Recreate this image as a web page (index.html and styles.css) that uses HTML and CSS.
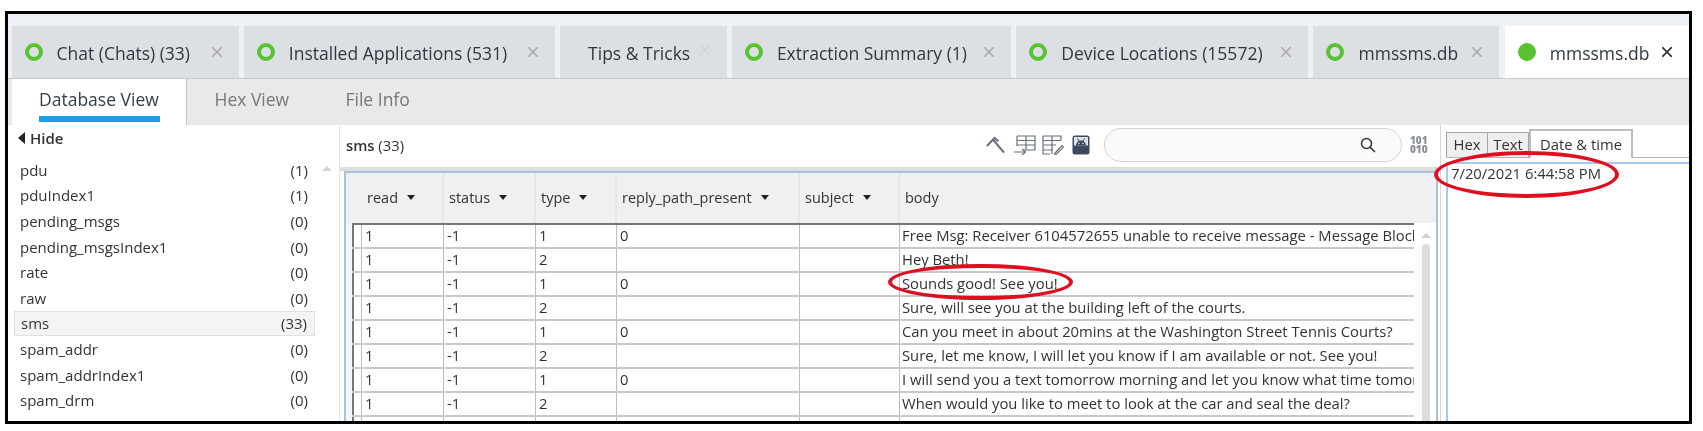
FILE: index.html
```html
<!DOCTYPE html>
<html lang="en">
<head>
<meta charset="utf-8">
<title>mmssms.db</title>
<link rel="stylesheet" href="styles.css">
</head>
<body>
<div class="frame">
  <nav class="tabs">
    <div class="tab"><span class="ring"></span><span class="tab-label">Chat (Chats) (33)</span><svg class="close" viewBox="0 0 10 10"><path d="M0 0L10 10M10 0L0 10"/></svg></div>
    <div class="tab"><span class="ring"></span><span class="tab-label">Installed Applications (531)</span><svg class="close" viewBox="0 0 10 10"><path d="M0 0L10 10M10 0L0 10"/></svg></div>
    <div class="tab tab-plain"><span class="tab-label">Tips &amp; Tricks</span><svg class="close close-faint" viewBox="0 0 10 10"><path d="M0 0L10 10M10 0L0 10"/></svg></div>
    <div class="tab"><span class="ring"></span><span class="tab-label">Extraction Summary (1)</span><svg class="close" viewBox="0 0 10 10"><path d="M0 0L10 10M10 0L0 10"/></svg></div>
    <div class="tab"><span class="ring"></span><span class="tab-label">Device Locations (15572)</span><svg class="close" viewBox="0 0 10 10"><path d="M0 0L10 10M10 0L0 10"/></svg></div>
    <div class="tab"><span class="ring"></span><span class="tab-label">mmssms.db</span><svg class="close" viewBox="0 0 10 10"><path d="M0 0L10 10M10 0L0 10"/></svg></div>
    <div class="tab tab-active"><span class="ring ring-solid"></span><span class="tab-label">mmssms.db</span><svg class="close close-dark" viewBox="0 0 10 10"><path d="M0 0L10 10M10 0L0 10"/></svg></div>
  </nav>

  <div class="subtabs">
    <div class="subtab subtab-active"><span class="subtab-label">Database View</span></div>
    <div class="subtab subtab-hex"><span class="subtab-label">Hex View</span></div>
    <div class="subtab subtab-file"><span class="subtab-label">File Info</span></div>
  </div>

  <div class="content">
    <aside class="side">
      <div class="hide"><span class="hide-arrow"></span>Hide</div>
      <div class="side-body">
        <ul class="list">
          <li class="item"><span>pdu</span><span>(1)</span></li>
          <li class="item"><span>pduIndex1</span><span>(1)</span></li>
          <li class="item"><span>pending_msgs</span><span>(0)</span></li>
          <li class="item"><span>pending_msgsIndex1</span><span>(0)</span></li>
          <li class="item"><span>rate</span><span>(0)</span></li>
          <li class="item"><span>raw</span><span>(0)</span></li>
          <li class="item item-selected"><span>sms</span><span>(33)</span></li>
          <li class="item"><span>spam_addr</span><span>(0)</span></li>
          <li class="item"><span>spam_addrIndex1</span><span>(0)</span></li>
          <li class="item"><span>spam_drm</span><span>(0)</span></li>
          <li class="item"><span>spam_filter</span><span>(0)</span></li>
        </ul>
        <div class="side-scroll"><span class="arrow-up"></span></div>
      </div>
    </aside>

    <section class="main">
      <header class="toolbar">
        <div class="title"><span class="title-name">sms</span> (33)</div>
        <div class="tools">
          <svg class="tool tool-pick" viewBox="0 0 20 18"><path d="M1 10L9 1.500L13 5" fill="none"/><path d="M7 3L19 17" fill="none"/></svg>
          <svg class="tool tool-table" viewBox="0 0 22 20"><path d="M3 1H21V15H9M3 1V11M3 5.500H21M3 10H21M12 1V15" fill="none"/><path d="M0 17H11M8 14L11.500 17L8 20" fill="none"/></svg>
          <svg class="tool tool-table" viewBox="0 0 22 20"><path d="M1 1H19V5M1 1V15H11M1 5.500H19M1 10H14M10 1V19M1 15V19H8" fill="none"/><path d="M13 18L20 10.500L21.500 12L14.500 19L12.500 19.500Z" fill="none"/></svg>
          <svg class="tool-android" viewBox="0 0 18 20"><rect x="0.500" y="0.500" width="17" height="19" rx="2.500" fill="#3b4a5e"/><rect x="2" y="2" width="14" height="8.500" fill="#dfe3e8"/><path d="M4 10.500A5 5 0 0 1 14 10.500Z" fill="#3b4a5e"/><path d="M5.500 3.500L7 6M12.500 3.500L11 6" stroke="#3b4a5e" stroke-width="1"/><circle cx="7" cy="8.500" r="0.800" fill="#dfe3e8"/><circle cx="11" cy="8.500" r="0.800" fill="#dfe3e8"/></svg>
        </div>
        <div class="search">
          <svg class="magnifier" viewBox="0 0 16 16"><circle cx="6.500" cy="6.500" r="5" fill="none"/><path d="M10 10L15 15"/></svg>
        </div>
        <div class="binary">101<br>010</div>
      </header>
      <div class="band"></div>
      <div class="grid-panel">
        <div class="grid-head">
          <div class="head-cell"></div>
          <div class="head-cell">read<span class="caret"></span></div>
          <div class="head-cell">status<span class="caret"></span></div>
          <div class="head-cell">type<span class="caret"></span></div>
          <div class="head-cell">reply_path_present<span class="caret"></span></div>
          <div class="head-cell">subject<span class="caret"></span></div>
          <div class="head-cell">body</div>
        </div>
        <div class="grid-body">
          <div class="rows">
            <div class="row"><div class="cell"></div><div class="cell">1</div><div class="cell">-1</div><div class="cell">1</div><div class="cell">0</div><div class="cell"></div><div class="cell cell-body">Free Msg: Receiver 6104572655 unable to receive message - Message Blocking is active.</div></div>
            <div class="row"><div class="cell"></div><div class="cell">1</div><div class="cell">-1</div><div class="cell">2</div><div class="cell"></div><div class="cell"></div><div class="cell cell-body">Hey Beth!</div></div>
            <div class="row"><div class="cell"></div><div class="cell">1</div><div class="cell">-1</div><div class="cell">1</div><div class="cell">0</div><div class="cell"></div><div class="cell cell-body">Sounds good! See you!</div></div>
            <div class="row"><div class="cell"></div><div class="cell">1</div><div class="cell">-1</div><div class="cell">2</div><div class="cell"></div><div class="cell"></div><div class="cell cell-body">Sure, will see you at the building left of the courts.</div></div>
            <div class="row"><div class="cell"></div><div class="cell">1</div><div class="cell">-1</div><div class="cell">1</div><div class="cell">0</div><div class="cell"></div><div class="cell cell-body">Can you meet in about 20mins at the Washington Street Tennis Courts?</div></div>
            <div class="row"><div class="cell"></div><div class="cell">1</div><div class="cell">-1</div><div class="cell">2</div><div class="cell"></div><div class="cell"></div><div class="cell cell-body">Sure, let me know, I will let you know if I am available or not. See you!</div></div>
            <div class="row"><div class="cell"></div><div class="cell">1</div><div class="cell">-1</div><div class="cell">1</div><div class="cell">0</div><div class="cell"></div><div class="cell cell-body">I will send you a text tomorrow morning and let you know what time tomorrow works.</div></div>
            <div class="row"><div class="cell"></div><div class="cell">1</div><div class="cell">-1</div><div class="cell">2</div><div class="cell"></div><div class="cell"></div><div class="cell cell-body">When would you like to meet to look at the car and seal the deal?</div></div>
            <div class="row"><div class="cell"></div><div class="cell">1</div><div class="cell">-1</div><div class="cell">1</div><div class="cell">0</div><div class="cell"></div><div class="cell cell-body">Hi, is the car still for sale?</div></div>
          </div>
          <div class="grid-scroll"><span class="arrow-up"></span><span class="thumb"></span></div>
        </div>
      </div>
    </section>

    <aside class="detail">
      <div class="detail-tabs">
        <div class="dtab dtab-hex">Hex</div>
        <div class="dtab dtab-text">Text</div>
        <div class="dtab dtab-active">Date &amp; time</div>
      </div>
      <div class="detail-box">7/20/2021 6:44:58 PM</div>
    </aside>
  </div>

  <span class="oval oval-date"></span>
  <span class="oval oval-msg"></span>
</div>
</body>
</html>
```
FILE: styles.css
```css
* { box-sizing: border-box; }
html, body { margin: 0; padding: 0; background: #fff; }
body { width: 1703px; height: 431px; overflow: hidden; font-family: "Open Sans", "Noto Sans", sans-serif; color: #2b2b2b; }

.frame {
  position: relative;
  width: 1687px;
  height: 413px;
  margin: 11px 0 0 5px;
  border: 3px solid #000;
  overflow: hidden;
  background: #fff;
  display: flex;
  flex-direction: column;
  filter: blur(0.45px);
}

/* top tabs */
.tabs {
  flex: none;
  height: 65px;
  padding: 12px 0 0 3.5px;
  background: #eef1f6;
  border-bottom: 1px solid #c9c9c9;
  display: grid;
  grid-template-columns: 227px 311px 166.500px 279px 292px 186px 184px;
  column-gap: 5.300px;
}
.tab {
  display: flex;
  align-items: center;
  padding: 0 17px 0 13px;
  background: #dde0e3;
  font-size: 17.500px;
  color: #2f3842;
}
.tab-plain { padding-left: 28px; }
.tab-active { background: #fff; }
.ring { flex: none; width: 18px; height: 18px; margin-right: 14px; border: 4px solid #58c332; border-radius: 50%; }
.ring-solid { background: #58c332; }
.tab-label { padding-top: 2px; white-space: nowrap; }
.close { flex: none; width: 10px; height: 10px; margin-left: auto; stroke: #a8a8a8; stroke-width: 1.500; }
.close-faint { stroke: #d0d3d6; margin-top: -5px; }
.close-dark { stroke: #333; stroke-width: 1.700; }

/* sub tabs */
.subtabs {
  flex: none;
  height: 46px;
  padding-left: 3.500px;
  background: #e9e9e9;
  display: flex;
  font-size: 17.500px;
  color: #777;
}
.subtab { display: flex; }
.subtab-label { display: block; padding-top: 8px; height: 43px; white-space: nowrap; }
.subtab-active { width: 175px; padding-left: 27.500px; background: #fff; border-right: 1px solid #c4c4c4; color: #33404c; }
.subtab-active .subtab-label { border-bottom: 6px solid #1b9fe0; width: 121px; }
.subtab-hex { margin-left: 28px; width: 131px; }
.subtab-file { width: 80px; }

/* content */
.content { flex: 1; min-height: 0; display: flex; }

.side { flex: none; width: 332px; border-right: 1px solid #e4e4e4; background: #fff; font-size: 15px; }
.hide { height: 32px; padding: 0 0 6px 10px; display: flex; align-items: center; font-weight: 600; color: #333; }
.hide-arrow { width: 0; height: 0; margin-right: 5px; border-style: solid; border-width: 6px 7px 6px 0; border-color: transparent #222 transparent transparent; }
.side-body { display: flex; }
.list { list-style: none; margin: 0 0 0 6px; padding: 0; width: 300.600px; }
.item { height: 25.600px; padding: 0 6.600px 0 6px; display: flex; justify-content: space-between; align-items: center; color: #333; border: 1px solid transparent; border-left-width: 0; border-right-width: 0; }
.item-selected { background: #f4f4f4; border: 1px solid #e0e0e0; }
.side-scroll { flex: 1; display: flex; justify-content: center; padding-top: 9px; }
.arrow-up { display: block; width: 0; height: 0; border-style: solid; border-width: 0 5px 5px 5px; border-color: transparent transparent #d2d2d2 transparent; }

.main { flex: none; width: 1101px; display: flex; flex-direction: column; min-height: 0; border-right: 1px solid #d8d8d8; }
.toolbar { flex: none; height: 42px; display: flex; align-items: center; padding: 0 0 2px 6px; font-size: 14.800px; color: #333; }
.title-name { font-weight: 600; }
.tools { margin-left: auto; display: flex; align-items: center; }
.tool { stroke: #68707a; stroke-width: 1.200; display: block; }
.tool-pick { width: 19px; height: 18px; stroke-width: 2.200; margin-right: 9px; }
.tool-table { width: 22px; height: 20px; margin-right: 6px; }
.tool-android { width: 18px; height: 20px; display: block; margin-left: 2px; }
.search {
  width: 298px; height: 34px; margin-left: 14px;
  display: flex; align-items: center; justify-content: flex-end;
  padding-right: 25px;
  border: 1px solid #d5d5d5; border-radius: 17px; background: #fafafa;
}
.magnifier { width: 16px; height: 16px; stroke: #333; stroke-width: 1.500; }
.binary { width: 38px; padding-left: 8px; font-size: 10px; line-height: 9px; font-weight: 800; color: #8a8f94; }
.band { flex: none; height: 4px; margin-right: 3px; background: #dddddd; }

.grid-panel { flex: 1; min-height: 0; margin: 0 2px 0 4px; border: 2px solid #a9c3db; border-bottom: 0; display: flex; flex-direction: column; font-size: 14.500px; background: #fff; }
.grid-head, .row { display: grid; grid-template-columns: 10px 82px 92px 81px 183px 100px 514px; }
.grid-head { flex: none; height: 50px; padding-left: 6px; background: #f0f0f0; }
.head-cell { display: flex; align-items: center; padding: 0 0 2px 5px; border-right: 2px solid #e6e6e6; font-weight: 500; color: #333; white-space: nowrap; }
.head-cell:first-child, .head-cell:last-child { border-right: 0; }
.caret { width: 0; height: 0; margin-left: 9px; border-style: solid; border-width: 5px 4.500px 0 4.500px; border-color: #222 transparent transparent transparent; }

.grid-body { flex: 1; min-height: 0; display: flex; }
.rows { flex: none; width: 1068px; margin: 0; border-left: 6px solid #f5f5f5; }
.row { height: 24px; border-bottom: 2px solid #c8c8c8; }
.rows::before { content: ""; display: block; height: 2px; background: #777; }
.row .cell:first-child { border-left: 2px solid #777; }
.cell { padding-left: 3px; border-right: 1px solid #bdbdbd; font-size: 14.800px; line-height: 21px; color: #333; white-space: nowrap; overflow: hidden; }
.cell-body { padding-left: 2px; border-right: 0; }
.grid-scroll { flex: 1; display: flex; flex-direction: column; align-items: center; padding: 10px 0 0 2px; }
.thumb { display: block; width: 8px; flex: 1; margin-top: 6px; border-radius: 4px 4px 0 0; background: #dcdcdc; }

.detail { flex: 1; min-width: 0; padding: 4px 0 0 5px; font-size: 14.800px; background: #fff; }
.detail-tabs { display: flex; align-items: flex-end; height: 29px; border-bottom: 1px solid #b5b5b5; }
.dtab { display: flex; align-items: center; justify-content: center; height: 25px; padding-bottom: 2px; background: #efefef; border: 1px solid #a5a5a5; border-bottom: 0; color: #333; }
.dtab-hex { width: 42px; }
.dtab-text { width: 41px; border-left: 0; }
.dtab-active { width: 104px; height: 29px; margin-bottom: -1px; background: #fff; border: 2px solid #bdbdbd; border-bottom: 0; }
.detail-box { height: 260px; margin: 4px 0 0 0; padding: 0 0 0 3px; border: solid #a9c9ea; border-width: 2px 0 0 2px; line-height: 19px; color: #333; }

/* red annotation ovals */
.oval { position: absolute; border: 4.500px solid #de0f1f; border-radius: 50%; }
.oval-date { left: 1426px; top: 137px; width: 185px; height: 47px; }
.oval-msg { left: 880px; top: 250px; width: 185px; height: 36px; }
```
